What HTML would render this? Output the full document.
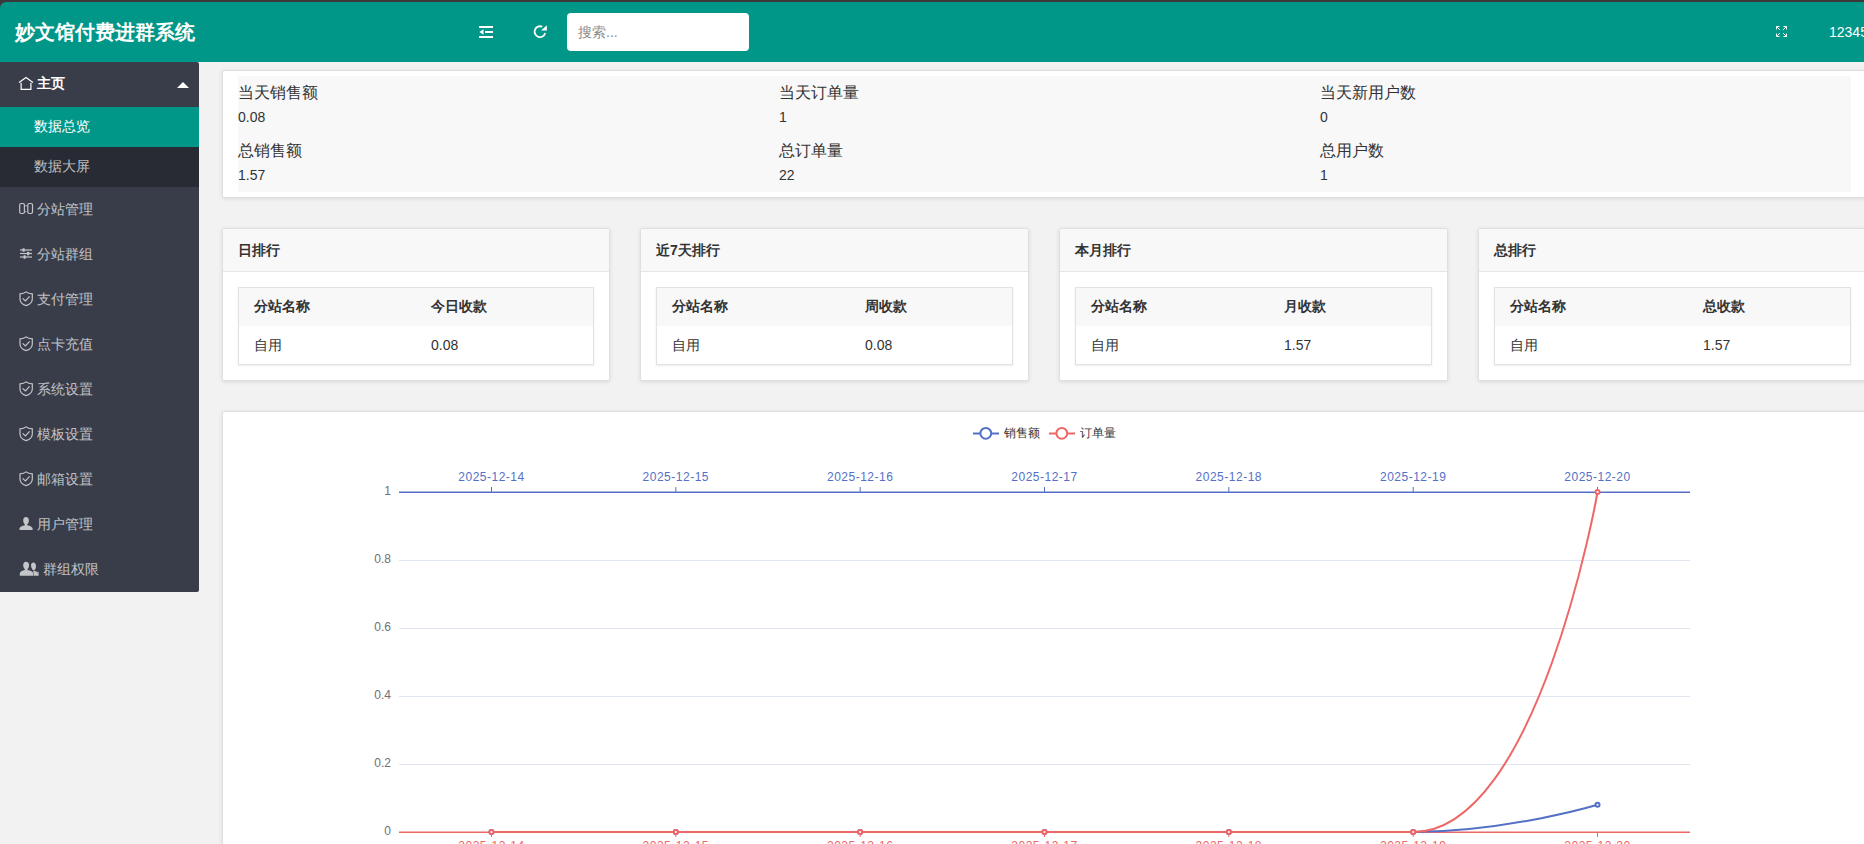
<!DOCTYPE html>
<html><head><meta charset="utf-8">
<style>
*{box-sizing:border-box;margin:0;padding:0}
html,body{width:1864px;height:844px;overflow:hidden;background:#f2f2f2;font-family:"Liberation Sans",sans-serif;color:#333}
.abs{position:absolute}
#topband{left:0;top:0;width:1864px;height:12px;background:#3b3939}
#header{left:0;top:2px;width:1864px;height:60px;background:#009688;border-top-left-radius:6px}
#logo{left:15px;top:19px;font-size:20px;font-weight:bold;color:#fff;line-height:26px;white-space:nowrap}
#search{left:567px;top:13px;width:182px;height:38px;background:#fff;border-radius:4px}
#search span{position:absolute;left:11px;top:11px;font-size:14px;color:#8c8c8c;line-height:16px}
#user{left:1829px;top:24px;font-size:14px;color:#fff;line-height:16px;white-space:nowrap}
#side{left:0;top:62px;width:199px;height:530px;background:#393D49;border-bottom-right-radius:2px;border-top-right-radius:2px}
.nav{position:absolute;left:0;width:199px;height:45px;color:rgba(255,255,255,.7);font-size:14px;line-height:45px}
.nav .t{position:absolute;left:37px;top:0}
.nav svg{position:absolute}
.child{position:absolute;left:0;width:199px;height:40px;font-size:14px;line-height:40px;background:#282B33;color:rgba(255,255,255,.7)}
.child .t{position:absolute;left:34px;top:-1px}
.card{position:absolute;background:#fff;box-shadow:0 1px 4px 0 rgba(0,0,0,.1);border:1px solid #e0dede;border-radius:2px}

.st{font-size:16px;line-height:20px;color:#333;white-space:nowrap}
.sv{font-size:14px;line-height:16px;color:#333;white-space:nowrap}
.rh{height:43px;background:#f8f8f8;border-bottom:1px solid #e6e6e6}
.rt{font-size:14px;font-weight:bold;line-height:42px;color:#333;white-space:nowrap}
.tb{height:78px;border:1px solid #e2e2e2;background:#fff;box-shadow:0 1px 2px rgba(0,0,0,.08)}
.th{height:38px;background:#f8f8f8}
.tht{font-size:14px;font-weight:bold;line-height:39px;color:#333;white-space:nowrap}
.tdt{font-size:14px;line-height:39px;color:#333;white-space:nowrap}

.yl{font-size:12px;fill:#6E7079;font-family:"Liberation Sans",sans-serif}
.xb{font-size:12px;letter-spacing:.5px;fill:#5470c6;font-family:"Liberation Sans",sans-serif}
.xr{font-size:12px;letter-spacing:.5px;fill:#ee6666;font-family:"Liberation Sans",sans-serif}
.lg{font-size:12px;fill:#333;font-family:"Liberation Sans",sans-serif}
</style></head><body>
<div id="topband" class="abs"></div>
<div id="header" class="abs"></div>
<div id="logo" class="abs">妙文馆付费进群系统</div>
<div id="search" class="abs"><span>搜索...</span></div>
<div id="user" class="abs">12345</div>

<div id="side" class="abs"></div>
<div class="nav" style="top:62px;color:#fff;font-weight:bold"><span class="t" style="top:-1px">主页</span></div>
<div class="child" style="top:107px;background:#009688;color:#fff"><span class="t">数据总览</span></div>
<div class="child" style="top:147px"><span class="t">数据大屏</span></div>
<div class="nav" style="top:187px"><span class="t">分站管理</span></div>
<div class="nav" style="top:232px"><span class="t">分站群组</span></div>
<div class="nav" style="top:277px"><span class="t">支付管理</span></div>
<div class="nav" style="top:322px"><span class="t">点卡充值</span></div>
<div class="nav" style="top:367px"><span class="t">系统设置</span></div>
<div class="nav" style="top:412px"><span class="t">模板设置</span></div>
<div class="nav" style="top:457px"><span class="t">邮箱设置</span></div>
<div class="nav" style="top:502px"><span class="t">用户管理</span></div>
<div class="nav" style="top:547px"><span class="t" style="left:43px">群组权限</span></div>

<!-- stats card -->
<div class="card" style="left:222px;top:70px;width:1645px;height:128px"></div>
<div class="abs" style="left:238px;top:76px;width:1613px;height:116px;background:#f8f8f8"></div>

<!-- ranking cards -->
<div class="card" style="left:222px;top:228px;width:388px;height:153px"></div>
<div class="card" style="left:640px;top:228px;width:389px;height:153px"></div>
<div class="card" style="left:1059px;top:228px;width:389px;height:153px"></div>
<div class="card" style="left:1478px;top:228px;width:389px;height:153px"></div>

<!-- chart card -->
<div class="card" style="left:222px;top:411px;width:1645px;height:500px"></div>

<!-- header icons -->
<svg class="abs" style="left:0;top:0" width="1864" height="62" viewBox="0 0 1864 62">
 <g fill="#fff">
  <rect x="479" y="26" width="14" height="2"/>
  <rect x="485" y="31" width="8" height="2"/>
  <rect x="479" y="36" width="14" height="2"/>
  <path d="M479.3 32 L483.5 29.2 L483.5 34.8 Z"/>
 </g>
 <path d="M545.2 33.1 A5.4 5.4 0 1 1 542.3 26.8" fill="none" stroke="#fff" stroke-width="1.8"/>
 <path d="M541 30.6 L546.9 30.6 L546.9 25.2 Z" fill="#fff"/>
 <g stroke="#fff" stroke-width="0.95" fill="none">
  <path d="M1776.5 26.5 L1780 30 M1776.5 26.5 h3 M1776.5 26.5 v3"/>
  <path d="M1786.5 26.5 L1783 30 M1786.5 26.5 h-3 M1786.5 26.5 v3"/>
  <path d="M1776.5 36.5 L1780 33 M1776.5 36.5 h3 M1776.5 36.5 v-3"/>
  <path d="M1786.5 36.5 L1783 33 M1786.5 36.5 h-3 M1786.5 36.5 v-3"/>
 </g>
</svg>

<!-- sidebar icons -->
<svg class="abs" style="left:0;top:62px" width="199" height="530" viewBox="0 62 199 530">
 <path d="M177 88 L183 82 L189 88 Z" fill="#fff"/>
 <path d="M19 82.6 L26 77.6 L33 82.6 M21.1 82.8 V89.3 H30.9 V82.8" fill="none" stroke="#fff" stroke-width="1.2"/>
 <g fill="none" stroke="#c4c5c8" stroke-width="1.2">
  <rect x="19.7" y="203.5" width="4.7" height="10" rx="1.4"/>
  <rect x="27.8" y="203.5" width="4.7" height="10" rx="1.4"/>
 </g>
 <circle cx="26.1" cy="205.7" r=".7" fill="#c4c5c8"/><circle cx="25.8" cy="211.6" r=".7" fill="#c4c5c8"/>
 <g fill="#c4c5c8">
  <rect x="20" y="249.4" width="12" height="1.2"/>
  <rect x="20" y="252.9" width="12" height="1.2"/>
  <rect x="20" y="256.4" width="12" height="1.2"/>
  <rect x="22.5" y="248.2" width="2.2" height="3.6" rx=".6"/>
  <rect x="27" y="251.7" width="2.2" height="3.6" rx=".6"/>
  <rect x="23.5" y="255.2" width="2.2" height="3.6" rx=".6"/>
 </g>
 <defs>
  <g id="shield">
   <path d="M26.1 291.9 C24.5 293.3 22.2 293.8 20 293.8 V299 C20 302.3 22.6 304.6 26.1 305.6 C29.6 304.6 32.3 302.3 32.3 299 V293.8 C30 293.8 27.7 293.3 26.1 291.9 Z" fill="none" stroke="#c4c5c8" stroke-width="1.2"/>
   <path d="M22.6 298.4 L25.4 301 L29.6 296.4" fill="none" stroke="#c4c5c8" stroke-width="1.2"/>
  </g>
 </defs>
 <use href="#shield"/>
 <use href="#shield" y="45"/>
 <use href="#shield" y="90"/>
 <use href="#shield" y="135"/>
 <use href="#shield" y="180"/>
 <path d="M26 517 C24.2 517 23.2 518.4 23.2 520.4 C23.2 522.2 24 523.6 24.8 524.2 L24.8 525.2 C22.4 525.8 19.5 526.8 19.5 528.6 V530 H32.6 V528.6 C32.6 526.8 29.7 525.8 27.3 525.2 L27.3 524.2 C28.1 523.6 28.9 522.2 28.9 520.4 C28.9 518.4 27.8 517 26 517 Z" fill="#c4c5c8"/>
 <path d="M33.5 562.6 C32 562.6 31 563.8 31 565.6 C31 567.1 31.7 568.4 32.3 568.9 V569.8 C33.8 570.3 35.2 570.8 36 571.8 H38.6 V574.4 C38.6 572.6 36.6 571.2 34.6 570.8 V569.8 C35.3 569.3 36 568 36 566.4 C36 564.1 34.9 562.6 33.5 562.6 Z" fill="#c4c5c8"/>
 <path d="M26 561.8 C24.2 561.8 23.2 563.2 23.2 565.2 C23.2 567 24 568.4 24.8 569 V570 C22.4 570.6 19.8 571.6 19.8 573.6 V575.8 H33.2 V573.6 C33.2 571.6 30.4 570.6 27.5 570 V569 C28.3 568.4 29.1 567 29.1 565.2 C29.1 563.2 27.9 561.8 26 561.8 Z" fill="#c4c5c8"/>
 <path d="M34.4 571 C36.6 571.6 38.6 572.6 38.6 574 V575.8 H33.6 V573.4 C33.6 572.3 33.2 571.6 32.6 571 Z" fill="#c4c5c8"/>
</svg>

<!-- stats text -->
<div class="abs st" style="left:238px;top:83px">当天销售额</div>
<div class="abs sv" style="left:238px;top:109px">0.08</div>
<div class="abs st" style="left:238px;top:141px">总销售额</div>
<div class="abs sv" style="left:238px;top:167px">1.57</div>
<div class="abs st" style="left:779px;top:83px">当天订单量</div>
<div class="abs sv" style="left:779px;top:109px">1</div>
<div class="abs st" style="left:779px;top:141px">总订单量</div>
<div class="abs sv" style="left:779px;top:167px">22</div>
<div class="abs st" style="left:1320px;top:83px">当天新用户数</div>
<div class="abs sv" style="left:1320px;top:109px">0</div>
<div class="abs st" style="left:1320px;top:141px">总用户数</div>
<div class="abs sv" style="left:1320px;top:167px">1</div>

<div class="abs rh" style="left:223px;top:229px;width:386px"></div>
<div class="abs rt" style="left:238px;top:229px">日排行</div>
<div class="abs tb" style="left:238px;top:287px;width:356px"></div>
<div class="abs th" style="left:239px;top:288px;width:354px"></div>
<div class="abs tht" style="left:254px;top:287px">分站名称</div>
<div class="abs tht" style="left:431px;top:287px">今日收款</div>
<div class="abs tdt" style="left:254px;top:326px">自用</div>
<div class="abs tdt" style="left:431px;top:326px">0.08</div>

<div class="abs rh" style="left:641px;top:229px;width:387px"></div>
<div class="abs rt" style="left:656px;top:229px">近7天排行</div>
<div class="abs tb" style="left:656px;top:287px;width:357px"></div>
<div class="abs th" style="left:657px;top:288px;width:355px"></div>
<div class="abs tht" style="left:672px;top:287px">分站名称</div>
<div class="abs tht" style="left:865px;top:287px">周收款</div>
<div class="abs tdt" style="left:672px;top:326px">自用</div>
<div class="abs tdt" style="left:865px;top:326px">0.08</div>

<div class="abs rh" style="left:1060px;top:229px;width:387px"></div>
<div class="abs rt" style="left:1075px;top:229px">本月排行</div>
<div class="abs tb" style="left:1075px;top:287px;width:357px"></div>
<div class="abs th" style="left:1076px;top:288px;width:355px"></div>
<div class="abs tht" style="left:1091px;top:287px">分站名称</div>
<div class="abs tht" style="left:1284px;top:287px">月收款</div>
<div class="abs tdt" style="left:1091px;top:326px">自用</div>
<div class="abs tdt" style="left:1284px;top:326px">1.57</div>

<div class="abs rh" style="left:1479px;top:229px;width:387px"></div>
<div class="abs rt" style="left:1494px;top:229px">总排行</div>
<div class="abs tb" style="left:1494px;top:287px;width:357px"></div>
<div class="abs th" style="left:1495px;top:288px;width:355px"></div>
<div class="abs tht" style="left:1510px;top:287px">分站名称</div>
<div class="abs tht" style="left:1703px;top:287px">总收款</div>
<div class="abs tdt" style="left:1510px;top:326px">自用</div>
<div class="abs tdt" style="left:1703px;top:326px">1.57</div>

<!-- chart -->
<svg class="abs" style="left:0;top:0" width="1864" height="844" viewBox="0 0 1864 844">
<line x1="399" y1="560.5" x2="1690" y2="560.5" stroke="#E0E6F1" stroke-width="1"/>
<line x1="399" y1="628.5" x2="1690" y2="628.5" stroke="#E0E6F1" stroke-width="1"/>
<line x1="399" y1="696.5" x2="1690" y2="696.5" stroke="#E0E6F1" stroke-width="1"/>
<line x1="399" y1="764.5" x2="1690" y2="764.5" stroke="#E0E6F1" stroke-width="1"/>
<text x="391" y="494.5" text-anchor="end" class="yl">1</text>
<text x="391" y="562.5" text-anchor="end" class="yl">0.8</text>
<text x="391" y="630.5" text-anchor="end" class="yl">0.6</text>
<text x="391" y="698.5" text-anchor="end" class="yl">0.4</text>
<text x="391" y="766.5" text-anchor="end" class="yl">0.2</text>
<text x="391" y="834.5" text-anchor="end" class="yl">0</text>
<line x1="399" y1="492.3" x2="1690" y2="492.3" stroke="#5470c6" stroke-width="1.4"/>
<line x1="491.5" y1="487" x2="491.5" y2="492" stroke="#5470c6" stroke-width="1"/>
<text x="491.5" y="481" text-anchor="middle" class="xb">2025-12-14</text>
<line x1="675.8" y1="487" x2="675.8" y2="492" stroke="#5470c6" stroke-width="1"/>
<text x="675.8" y="481" text-anchor="middle" class="xb">2025-12-15</text>
<line x1="860.2" y1="487" x2="860.2" y2="492" stroke="#5470c6" stroke-width="1"/>
<text x="860.2" y="481" text-anchor="middle" class="xb">2025-12-16</text>
<line x1="1044.5" y1="487" x2="1044.5" y2="492" stroke="#5470c6" stroke-width="1"/>
<text x="1044.5" y="481" text-anchor="middle" class="xb">2025-12-17</text>
<line x1="1228.8" y1="487" x2="1228.8" y2="492" stroke="#5470c6" stroke-width="1"/>
<text x="1228.8" y="481" text-anchor="middle" class="xb">2025-12-18</text>
<line x1="1413.2" y1="487" x2="1413.2" y2="492" stroke="#5470c6" stroke-width="1"/>
<text x="1413.2" y="481" text-anchor="middle" class="xb">2025-12-19</text>
<line x1="1597.5" y1="487" x2="1597.5" y2="492" stroke="#5470c6" stroke-width="1"/>
<text x="1597.5" y="481" text-anchor="middle" class="xb">2025-12-20</text>
<line x1="399" y1="832.3" x2="1690" y2="832.3" stroke="#ee6666" stroke-width="1.4"/>
<line x1="491.5" y1="832" x2="491.5" y2="837" stroke="#ee6666" stroke-width="1"/>
<text x="491.5" y="850" text-anchor="middle" class="xr">2025-12-14</text>
<line x1="675.8" y1="832" x2="675.8" y2="837" stroke="#ee6666" stroke-width="1"/>
<text x="675.8" y="850" text-anchor="middle" class="xr">2025-12-15</text>
<line x1="860.2" y1="832" x2="860.2" y2="837" stroke="#ee6666" stroke-width="1"/>
<text x="860.2" y="850" text-anchor="middle" class="xr">2025-12-16</text>
<line x1="1044.5" y1="832" x2="1044.5" y2="837" stroke="#ee6666" stroke-width="1"/>
<text x="1044.5" y="850" text-anchor="middle" class="xr">2025-12-17</text>
<line x1="1228.8" y1="832" x2="1228.8" y2="837" stroke="#ee6666" stroke-width="1"/>
<text x="1228.8" y="850" text-anchor="middle" class="xr">2025-12-18</text>
<line x1="1413.2" y1="832" x2="1413.2" y2="837" stroke="#ee6666" stroke-width="1"/>
<text x="1413.2" y="850" text-anchor="middle" class="xr">2025-12-19</text>
<line x1="1597.5" y1="832" x2="1597.5" y2="837" stroke="#ee6666" stroke-width="1"/>
<text x="1597.5" y="850" text-anchor="middle" class="xr">2025-12-20</text>
<path d="M491.47 832 L1413.19 832 C1505.85 832 1597.53 804.8 1597.53 804.8" fill="none" stroke="#5470c6" stroke-width="2"/>
<circle cx="491.47" cy="832" r="2" fill="#fff" stroke="#5470c6" stroke-width="2"/>
<circle cx="675.81" cy="832" r="2" fill="#fff" stroke="#5470c6" stroke-width="2"/>
<circle cx="860.16" cy="832" r="2" fill="#fff" stroke="#5470c6" stroke-width="2"/>
<circle cx="1044.50" cy="832" r="2" fill="#fff" stroke="#5470c6" stroke-width="2"/>
<circle cx="1228.84" cy="832" r="2" fill="#fff" stroke="#5470c6" stroke-width="2"/>
<circle cx="1413.19" cy="832" r="2" fill="#fff" stroke="#5470c6" stroke-width="2"/>
<circle cx="1597.53" cy="804.8" r="2" fill="#fff" stroke="#5470c6" stroke-width="2"/>
<path d="M491.47 832 L1413.19 832 C1538.03 832 1597.53 492 1597.53 492" fill="none" stroke="#ee6666" stroke-width="2"/>
<circle cx="491.47" cy="832" r="2" fill="#fff" stroke="#ee6666" stroke-width="2"/>
<circle cx="675.81" cy="832" r="2" fill="#fff" stroke="#ee6666" stroke-width="2"/>
<circle cx="860.16" cy="832" r="2" fill="#fff" stroke="#ee6666" stroke-width="2"/>
<circle cx="1044.50" cy="832" r="2" fill="#fff" stroke="#ee6666" stroke-width="2"/>
<circle cx="1228.84" cy="832" r="2" fill="#fff" stroke="#ee6666" stroke-width="2"/>
<circle cx="1413.19" cy="832" r="2" fill="#fff" stroke="#ee6666" stroke-width="2"/>
<circle cx="1597.53" cy="492" r="2" fill="#fff" stroke="#ee6666" stroke-width="2"/>
<line x1="973" y1="433.5" x2="999" y2="433.5" stroke="#5470c6" stroke-width="2"/>
<circle cx="985.8" cy="433.3" r="5.4" fill="#fff" stroke="#5470c6" stroke-width="2"/>
<text x="1003.5" y="436.8" class="lg">销售额</text>
<line x1="1049" y1="433.5" x2="1075" y2="433.5" stroke="#ee6666" stroke-width="2"/>
<circle cx="1061.8" cy="433.3" r="5.4" fill="#fff" stroke="#ee6666" stroke-width="2"/>
<text x="1079.5" y="436.8" class="lg">订单量</text>
</svg>
</body></html>
